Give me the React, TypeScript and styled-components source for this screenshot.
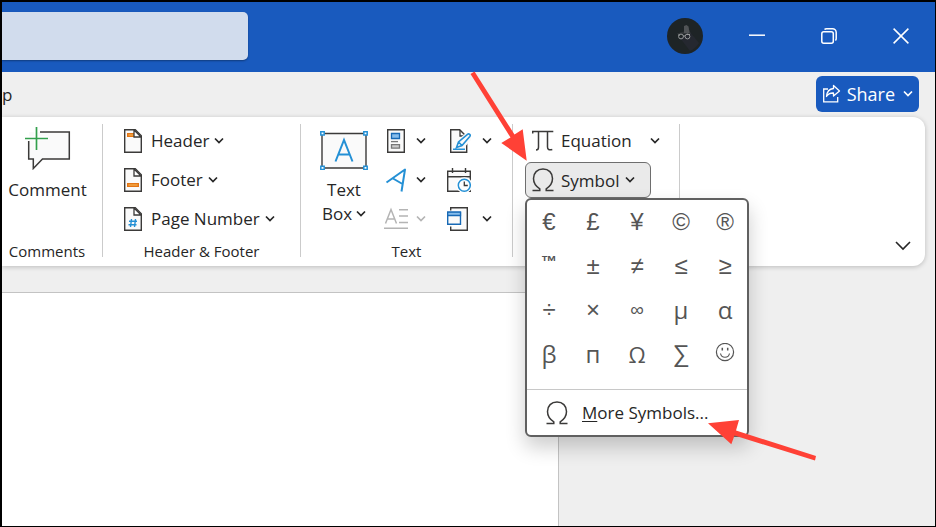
import React from "react";
import styled, { createGlobalStyle } from "styled-components";

const ink = "#3b3a39";
const blue = "#2490d5";
const brand = "#195abe";
const canvas = "#efefef";

const GlobalStyle = createGlobalStyle`
  * { box-sizing: border-box; }
  body { margin: 0; font-family: "Open Sans", "Noto Sans", sans-serif; color: #262626; }
  button { font: inherit; color: inherit; background: none; border: 0; padding: 0; margin: 0; }
  svg { display: block; flex: none; }
`;

const Window = styled.div`
  position: relative;
  min-height: 100vh;
  display: flex;
  flex-direction: column;
  background: ${canvas};
  border: solid #000;
  border-width: 2px 1px 1px 2px;
  overflow: hidden;
`;

const TitleBar = styled.header`
  display: flex;
  align-items: center;
  height: 70px;
  padding-bottom: 2px;
  background: ${brand};
  color: #fff;
`;

const Search = styled.input`
  width: 246px;
  height: 48px;
  border: 0;
  border-radius: 0 5px 5px 0;
  background: #d1dced;
  box-shadow: 0 1px 2px rgba(0, 0, 0, 0.35);
  outline: none;
`;

const WindowControls = styled.div`
  display: flex;
  align-items: center;
  gap: 4px;
  margin-left: auto;
`;

const Avatar = styled.button`
  && { margin-right: 16px; }
`;

const WindowButton = styled.button`
  width: 68px;
  height: 48px;
  display: grid;
  place-items: center;
`;

const TabRow = styled.nav`
  display: flex;
  align-items: center;
  justify-content: space-between;
  height: 45px;
  padding-right: 16px;
`;

const Tab = styled.button`
  && { font-size: 17px; }
  line-height: 24px;
`;

const ShareButton = styled.button`
  && {
    display: flex;
    align-items: center;
    height: 36px;
    margin-bottom: 1px;
    padding: 0 6px;
    border-radius: 6px;
    background: ${brand};
    color: #fff;
    font-size: 18px;
  }
  span { margin: 0 8px 0 6px; }
`;

const Ribbon = styled.section`
  display: flex;
  margin-right: 10px;
  background: #fff;
  border-radius: 0 12px 12px 0;
  box-shadow: 0 1px 5px rgba(0, 0, 0, 0.22);
`;

const Group = styled.div<{ $width: number; $start?: number; $end?: number }>`
  flex: none;
  width: ${(p) => p.$width}px;
  padding: 4px 0 3px;

  > div:first-child {
    height: 118px;
    padding-left: ${(p) => p.$start ?? 0}px;
  }
  > div:last-child {
    padding-right: ${(p) => p.$end ?? 0}px;
  }
`;

const GroupLabel = styled.div`
  height: 24px;
  font-size: 15px;
  line-height: 24px;
  text-align: center;
  white-space: nowrap;
`;

const Divider = styled.div`
  flex: none;
  width: 1px;
  margin: 7px 0 9px;
  background: #cbcbcb;
`;

const Stack = styled.div`
  display: flex;
  flex-direction: column;
  align-items: flex-start;
`;

const Tools = styled.div`
  display: flex;
`;

const BigButton = styled.button`
  && {
    display: flex;
    flex-direction: column;
    align-items: center;
    justify-content: flex-start;
    padding-top: 5px;
    font-size: 17px;
    line-height: 24px;
  }
  svg + span { margin-top: 8px; }
  span { display: flex; align-items: center; gap: 4px; }
`;

const CommentButton = styled(BigButton)`
  && { width: 91px; }
`;

const RowButton = styled.button<{ $gap?: number }>`
  && {
    display: flex;
    align-items: center;
    height: 39px;
    gap: ${(p) => p.$gap ?? 9}px;
    font-size: 17px;
    white-space: nowrap;
  }
`;

const Label = styled.span<{ $gap?: number }>`
  display: flex;
  align-items: center;
  gap: ${(p) => p.$gap ?? 5}px;
`;

const IconColumn = styled(Stack)<{ $before: number }>`
  margin-left: ${(p) => p.$before}px;
`;

const SymbolAnchor = styled.div`
  position: relative;
  margin: 2px 0 1px -7px;
`;

const SymbolButton = styled(RowButton)`
  && {
    width: 126px;
    height: 36px;
    padding-left: 6px;
    border: 1px solid #6e6e6e;
    border-radius: 6px;
    background: #eaeaea;
  }
`;

const Menu = styled.div`
  position: absolute;
  z-index: 2;
  top: 100%;
  left: 0;
  width: 224px;
  background: #fff;
  border: 2px solid #606060;
  border-radius: 6px;
  box-shadow: 0 10px 20px rgba(0, 0, 0, 0.2);
`;

const SymbolGrid = styled.div`
  display: grid;
  grid-template-columns: repeat(5, 44px);
  grid-auto-rows: 44px;
  padding-bottom: 13px;
  border-bottom: 1px solid #c8c8c8;
`;

const Glyph = styled.button<{ $humanist?: boolean; $size?: number }>`
  && {
    display: grid;
    place-items: center;
    color: #555;
    font-family: ${(p) => (p.$humanist ? '"Open Sans", "Noto Sans"' : '"Liberation Sans"')}, sans-serif;
    font-size: ${(p) => p.$size ?? 24}px;
    line-height: 42px;
  }
`;

const TradeMark = styled(Glyph)`
  && {
    align-items: start;
    font-weight: 700;
    line-height: 36px;
  }
`;

const MoreButton = styled.button`
  && {
    display: flex;
    align-items: center;
    gap: 14px;
    width: 100%;
    height: 45px;
    padding-left: 19px;
    font-size: 17px;
  }
  u { text-underline-offset: 2px; }
`;

const Collapse = styled.button`
  && {
    align-self: flex-end;
    margin: 0 14px 13px auto;
  }
`;

const Paper = styled.main`
  flex: 1;
  width: 60%;
  max-width: 557px;
  margin-top: 26px;
  background: #fff;
  border: solid #c3c3c3;
  border-width: 1px 1px 0 0;
`;

const Annotations = styled.svg`
  position: absolute;
  z-index: 3;
  top: -2px;
  left: -2px;
  pointer-events: none;
`;

const Chevron = ({ color = "#262626" }: { color?: string }) => (
  <svg width="10" height="8" viewBox="0 0 10 8" fill="none" stroke={color} strokeWidth="1.7">
    <path d="M1 1.500l4 4 4-4" />
  </svg>
);

const PageIcon = ({ children }: { children: React.ReactNode }) => (
  <svg width="18" height="24" viewBox="0 0 18 24" fill="none">
    <path d="M.7.7h10.6l6 6v16.6H.7z" fill="#fafafa" stroke={ink} strokeWidth="1.4" />
    {children}
    <path d="M10 1v7h7z" fill="#fff" stroke={ink} strokeWidth="1.3" />
  </svg>
);

const Omega = () => (
  <svg width="22" height="24" viewBox="0 0 22 24" fill="none" stroke={ink} strokeWidth="1.5">
    <path d="M.5 22.600h7.300v-1.800C3.800 18.300 1.500 15 1.500 10.500 1.500 4.800 5.300 1 11 1s9.500 3.800 9.500 9.500c0 4.500-2.300 7.800-6.300 10.300v1.800h7.300" />
  </svg>
);

const symbols: { char: string; humanist?: boolean; size?: number }[] = [
  { char: "€" }, { char: "£" }, { char: "¥" }, { char: "©" }, { char: "®" },
  { char: "™", size: 16 }, { char: "±" }, { char: "≠" }, { char: "≤" }, { char: "≥" },
  { char: "÷" }, { char: "×" }, { char: "∞", size: 19 }, { char: "μ", humanist: true }, { char: "α", humanist: true },
  { char: "β", humanist: true }, { char: "п", humanist: true }, { char: "Ω", humanist: true, size: 22 }, { char: "∑" },
];

const CommentIcon = () => (
  <svg width="48" height="44" viewBox="0 0 48 44" fill="none">
    <path d="M5 6h40v27H18L9 42v-9H5z" fill="#fafafa" />
    <path d="M16 6h29.300v27H18.500L9.300 42.500V33H4.700V15" stroke={ink} strokeWidth="1.5" />
    <path d="M12 1v23M1 12.300h23" stroke="#fff" strokeWidth="4" />
    <path d="M12.500 1v23M1 12.500h23" stroke="#33a04d" strokeWidth="1.700" />
  </svg>
);

const TextBoxIcon = () => (
  <svg width="48" height="44" viewBox="0 0 48 44" fill="none">
    <path d="M2 7.500h44V42H2z" fill="#fafafa" stroke={ink} strokeWidth="1.400" />
    <g fill="#fff" stroke={blue} strokeWidth="1.500">
      <path d="M.8 5.700h3.400v3.400H.8zM43.800 5.700h3.400v3.400h-3.400zM.8 40.200h3.400v3.400H.8zM43.800 40.200h3.400v3.400h-3.400z" />
    </g>
    <path d="M15.500 35.500L24 14l8.500 21.500M18.500 28.500h11" stroke={blue} strokeWidth="2" />
  </svg>
);

const QuickPartsIcon = () => (
  <svg width="24" height="24" viewBox="0 0 24 24" fill="none">
    <path d="M3.700.7h16.600v22.600H3.700z" fill="#fafafa" stroke={ink} strokeWidth="1.400" />
    <path d="M7.500 4.500h8v5h-8z" fill="#86bdec" stroke="#1769b5" strokeWidth="1.300" />
    <path d="M7 12.600h7" stroke="#777" strokeWidth="1.300" />
    <path d="M7.500 15.700h8v3.500h-8z" fill="#ccc" stroke="#777" strokeWidth="1.300" />
  </svg>
);

const WordArtIcon = () => (
  <svg width="24" height="24" viewBox="0 0 24 24" fill="none" stroke={blue} strokeWidth="2">
    <path d="M2.500 14.500L21 1.500 17.500 23.500M9 10.500l9.500 5.500" strokeLinejoin="round" />
  </svg>
);

const DropCapIcon = () => (
  <svg width="24" height="24" viewBox="0 0 24 24" fill="none" stroke="#b4b4b4">
    <path d="M1.500 16.500L7 2.500l5.500 14M3.500 12h7" strokeWidth="1.500" />
    <path d="M15 2.700h9M15 9h9M15 15.500h9M0 21.300h24" strokeWidth="1.500" />
  </svg>
);

const SignatureIcon = () => (
  <svg width="24" height="24" viewBox="0 0 24 24" fill="none">
    <path d="M3.700.7h9l7 7v15.600h-16z" fill="#fafafa" stroke={ink} strokeWidth="1.400" />
    <path d="M13 1v6h6" stroke={ink} strokeWidth="1.300" />
    <path d="M8 20l3-9 9-8 5 3v4l-9 10z" fill="#fafafa" />
    <path d="M9.500 18.500l2-5.500 9-7.700c1.500-1.200 3.500.6 2.300 2.200L15 16.500zM11.500 13l3.500 3.500M6 20.300h12" stroke={blue} strokeWidth="1.600" />
  </svg>
);

const DateTimeIcon = () => (
  <svg width="24" height="24" viewBox="0 0 24 24" fill="none">
    <path d="M.7 3.200h22.600v20.100H.7z" fill="#fafafa" stroke={ink} strokeWidth="1.400" />
    <path d="M.7 8.700h22.600M5.500 0v5M18.500 0v5" stroke={ink} strokeWidth="1.400" />
    <circle cx="17.300" cy="17.200" r="8" fill="#fff" />
    <circle cx="17.300" cy="17.200" r="6" fill="#fff" stroke={blue} strokeWidth="1.500" />
    <path d="M17.300 13.500v4h3.500" stroke={ink} strokeWidth="1.300" />
  </svg>
);

const ObjectIcon = () => (
  <svg width="24" height="24" viewBox="0 0 24 24" fill="none">
    <path d="M3.700.7h16.600v22.600H3.700z" fill="#fafafa" stroke={ink} strokeWidth="1.400" />
    <path d="M0 3.500h15v16H0z" fill="#fff" />
    <path d="M.7 5.200h12.800v12.100H.7z" fill="#fafafa" stroke="#1769b5" strokeWidth="1.400" />
    <path d="M.7 5.200h12.800v3.300H.7z" fill="#86bdec" stroke="#1769b5" strokeWidth="1.300" />
  </svg>
);

const PiIcon = () => (
  <svg width="22" height="24" viewBox="0 0 22 24" fill="none" stroke={ink} strokeWidth="1.500">
    <path d="M.7 4.500V2.500h20.600M6.500 2.500v15.700c0 1.800-.8 2.800-2.500 2.800M15.500 2.500V18c0 2.400 1.500 3.500 4.800 2.500" />
  </svg>
);

export default function App() {
  return (
    <>
      <GlobalStyle />
      <Window>
        <TitleBar>
          <Search aria-label="Search" />
          <WindowControls>
            <Avatar aria-label="Account">
              <svg width="36" height="36" viewBox="0 0 36 36">
                <circle cx="18" cy="18" r="18" fill="#1e2426" />
                <path d="M13 20l10-6 9 11q-4 6-9 8z" fill="#252830" />
                <path d="M10 15.500l7-2V8l4 1 3 7H10z" fill="#303437" />
                <path d="M17 8l2.500-1 2 1.500 1 6.500H17z" fill="#505356" />
                <g fill="none" stroke="#969899" strokeWidth="1">
                  <circle cx="14" cy="18.500" r="2.400" />
                  <circle cx="20.500" cy="18.500" r="2.400" />
                  <path d="M11 17h2M16 18h2M20 16.500h3" />
                </g>
              </svg>
            </Avatar>
            <WindowButton aria-label="Minimize">
              <svg width="16" height="16" viewBox="0 0 16 16" stroke="#fff" strokeWidth="1.500">
                <path d="M0 7.200h16" />
              </svg>
            </WindowButton>
            <WindowButton aria-label="Restore">
              <svg width="16" height="16" viewBox="0 0 16 16" fill="none" stroke="#fff" strokeWidth="1.500">
                <rect x=".8" y="3.700" width="11.500" height="11.500" rx="2" />
                <path d="M3.500 1.500Q4.200.8 5.500.8H11.500a3.700 3.700 0 0 1 3.700 3.700v6q0 1.300-.8 2" />
              </svg>
            </WindowButton>
            <WindowButton aria-label="Close">
              <svg width="16" height="16" viewBox="0 0 16 16" stroke="#fff" strokeWidth="1.500">
                <path d="M.6.6l14.800 14.800M15.400.6L.6 15.400" />
              </svg>
            </WindowButton>
          </WindowControls>
        </TitleBar>

        <TabRow>
          <Tab>p</Tab>
          <ShareButton>
            <svg width="19" height="20" viewBox="0 0 19 20" fill="none" stroke="#fff" strokeWidth="1.300">
              <path d="M6 5H1.700v12.800h14V13" />
              <path d="M11.500 1.500L17.500 7l-6 5V9C8 8.800 6 10 4.500 12.500 4.800 8 7.500 5 11.500 4.500z" strokeLinejoin="round" />
            </svg>
            <span>Share</span>
            <Chevron color="#fff" />
          </ShareButton>
        </TabRow>

        <Ribbon aria-label="Insert">
          <Group $width={100} $end={10}>
            <Tools>
              <CommentButton>
                <CommentIcon />
                <span>Comment</span>
              </CommentButton>
            </Tools>
            <GroupLabel>Comments</GroupLabel>
          </Group>
          <Divider />

          <Group $width={197} $start={21}>
            <Stack>
              <RowButton>
                <PageIcon>
                  <path d="M3.700 4.700h7v2.600h-7z" fill="#fbc15e" stroke="#e37415" strokeWidth="1.400" />
                </PageIcon>
                <Label>Header <Chevron /></Label>
              </RowButton>
              <RowButton>
                <PageIcon>
                  <path d="M3.700 15.700h10.600v2.600H3.700z" fill="#fbc15e" stroke="#e37415" strokeWidth="1.400" />
                </PageIcon>
                <Label>Footer <Chevron /></Label>
              </RowButton>
              <RowButton>
                <PageIcon>
                  <path d="M7.500 12l-1 8M11.500 12l-1 8M5 14.200h8M4.500 17.700h8" stroke={blue} strokeWidth="1.400" />
                </PageIcon>
                <Label>Page Number <Chevron /></Label>
              </RowButton>
            </Stack>
            <GroupLabel>Header &amp; Footer</GroupLabel>
          </Group>
          <Divider />

          <Group $width={211} $start={19}>
            <Tools>
              <BigButton>
                <TextBoxIcon />
                <span>Text</span>
                <span>Box <Chevron /></span>
              </BigButton>
              <IconColumn $before={16}>
                <RowButton $gap={8} aria-label="Quick Parts"><QuickPartsIcon /><Chevron /></RowButton>
                <RowButton $gap={8} aria-label="WordArt"><WordArtIcon /><Chevron /></RowButton>
                <RowButton $gap={8} aria-label="Drop Cap" disabled><DropCapIcon /><Chevron color="#b4b4b4" /></RowButton>
              </IconColumn>
              <IconColumn $before={21}>
                <RowButton $gap={11} aria-label="Signature Line"><SignatureIcon /><Chevron /></RowButton>
                <RowButton aria-label="Date and Time"><DateTimeIcon /></RowButton>
                <RowButton $gap={11} aria-label="Object"><ObjectIcon /><Chevron /></RowButton>
              </IconColumn>
            </Tools>
            <GroupLabel>Text</GroupLabel>
          </Group>
          <Divider />

          <Group $width={166} $start={19}>
            <Stack>
              <RowButton $gap={7}>
                <PiIcon />
                <Label $gap={18}>Equation <Chevron /></Label>
              </RowButton>
              <SymbolAnchor>
                <SymbolButton $gap={7} aria-haspopup="menu" aria-expanded="true">
                  <Omega />
                  <Label>Symbol <Chevron /></Label>
                </SymbolButton>
                <Menu role="menu">
                  <SymbolGrid>
                    {symbols.map((s) => {
                      const Cell = s.char === "™" ? TradeMark : Glyph;
                      return (
                        <Cell key={s.char} $humanist={s.humanist} $size={s.size}>{s.char}</Cell>
                      );
                    })}
                    <Glyph aria-label="Smiling face">
                      <svg width="20" height="22" viewBox="0 0 20 22" fill="none" stroke="#555" strokeWidth="1.200">
                        <circle cx="10" cy="9" r="8.600" />
                        <path d="M5.500 10.500c1 5 8 5 9 0" />
                        <path d="M7.300 4.800v2.700M12.700 4.800v2.700" strokeWidth="1.500" />
                      </svg>
                    </Glyph>
                  </SymbolGrid>
                  <MoreButton role="menuitem">
                    <Omega />
                    <span><u>M</u>ore Symbols...</span>
                  </MoreButton>
                </Menu>
              </SymbolAnchor>
            </Stack>
            <GroupLabel />
          </Group>
          <Divider />

          <Collapse aria-label="Collapse ribbon">
            <svg width="16" height="16" viewBox="0 0 16 16" fill="none" stroke="#262626" strokeWidth="1.600">
              <path d="M1 5l7 7 7-7" />
            </svg>
          </Collapse>
        </Ribbon>

        <Paper />

        <Annotations width="936" height="527" viewBox="0 0 936 527" fill="#ff4136" aria-hidden="true">
          <path d="M474.500 71.500L514.500 134.500L522.700 129.300L526.700 160.700L501.300 143L510.500 137.500L470.500 74z" />
          <path d="M708 423.300L739 420L736 430.500L816 456L815 460.500L734.500 435.500L731.300 444.300z" />
        </Annotations>
      </Window>
    </>
  );
}
